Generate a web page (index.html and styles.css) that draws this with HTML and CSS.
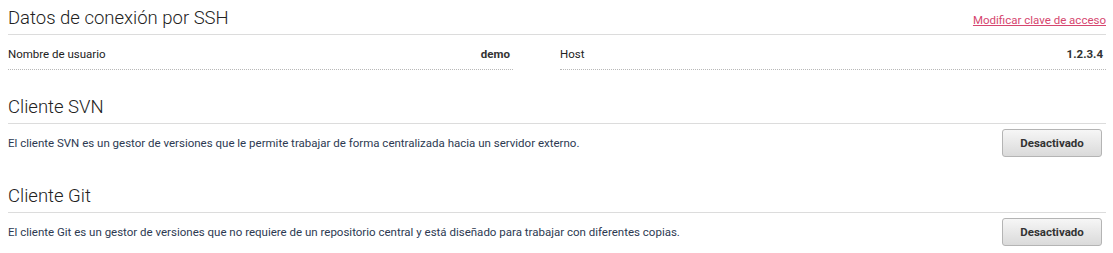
FILE: index.html
```html
<!DOCTYPE html>
<html lang="es">
  <head>
    <meta charset="UTF-8">
    <title>Conexión SSH</title>
    <link rel="stylesheet" href="styles.css">
  </head>
  <body>
    <section class="block">
      <div class="blockHead">
        <h2>Datos de conexión por SSH</h2>
        <a class="headLink" href="#">Modificar clave de acceso</a>
      </div>
      <div class="infoGrid">
        <div class="infoRow">
          <span>Nombre de usuario</span>
          <b>demo</b>
        </div>
        <div class="infoRow">
          <span>Host</span>
          <b>1.2.3.4</b>
        </div>
      </div>
    </section>

    <section class="block">
      <div class="blockHead">
        <h2>Cliente SVN</h2>
      </div>
      <div class="toggleRow">
        <p>El cliente SVN es un gestor de versiones que le permite trabajar de forma centralizada hacia un servidor externo.</p>
        <button class="toggleBtn" type="button">Desactivado</button>
      </div>
    </section>

    <section class="block">
      <div class="blockHead">
        <h2>Cliente Git</h2>
      </div>
      <div class="toggleRow">
        <p>El cliente Git es un gestor de versiones que no requiere de un repositorio central y está diseñado para trabajar con diferentes copias.</p>
        <button class="toggleBtn" type="button">Desactivado</button>
      </div>
    </section>
  </body>
</html>
```

FILE: styles.css
```css
body {
    margin: 0;
    padding: 6px 7px 0 8px;
    background: white;
    font-family: Roboto, "Liberation Sans", sans-serif;
    font-size: 11.5px;
    color: #222;
}
.block + .block {
    margin-top: 25px;
}
.blockHead {
    display: flex;
    justify-content: space-between;
    align-items: baseline;
    padding-bottom: 4px;
    border-bottom: 1px solid #dcdcdc;
}
.blockHead h2 {
    margin: 0;
    font-size: 18.5px;
    font-weight: 300;
    line-height: 24px;
    color: #222;
}
.headLink {
    font-size: 11.5px;
    color: #d6466f;
}
.infoGrid {
    display: grid;
    grid-template-columns: 505px 1fr;
    column-gap: 47px;
}
.infoRow {
    display: flex;
    justify-content: space-between;
    padding: 11px 3px 7px 0;
    line-height: 16px;
    border-bottom: 1px dotted #b8b8b8;
}
.infoRow b {
    font-weight: 700;
    color: #333;
}
.toggleRow {
    display: flex;
    justify-content: space-between;
    align-items: center;
    padding: 5px 4px 2px 0;
}
.toggleRow p {
    margin: 0;
    color: #2d3a52;
    line-height: 16px;
}
.toggleBtn {
    width: 100px;
    height: 28px;
    border: 1px solid #b4b4b4;
    border-radius: 3px;
    background: linear-gradient(#f6f6f6, #dadada);
    font-family: Roboto, "Liberation Sans", sans-serif;
    font-size: 11.5px;
    font-weight: 700;
    color: #333;
    cursor: pointer;
}
```
